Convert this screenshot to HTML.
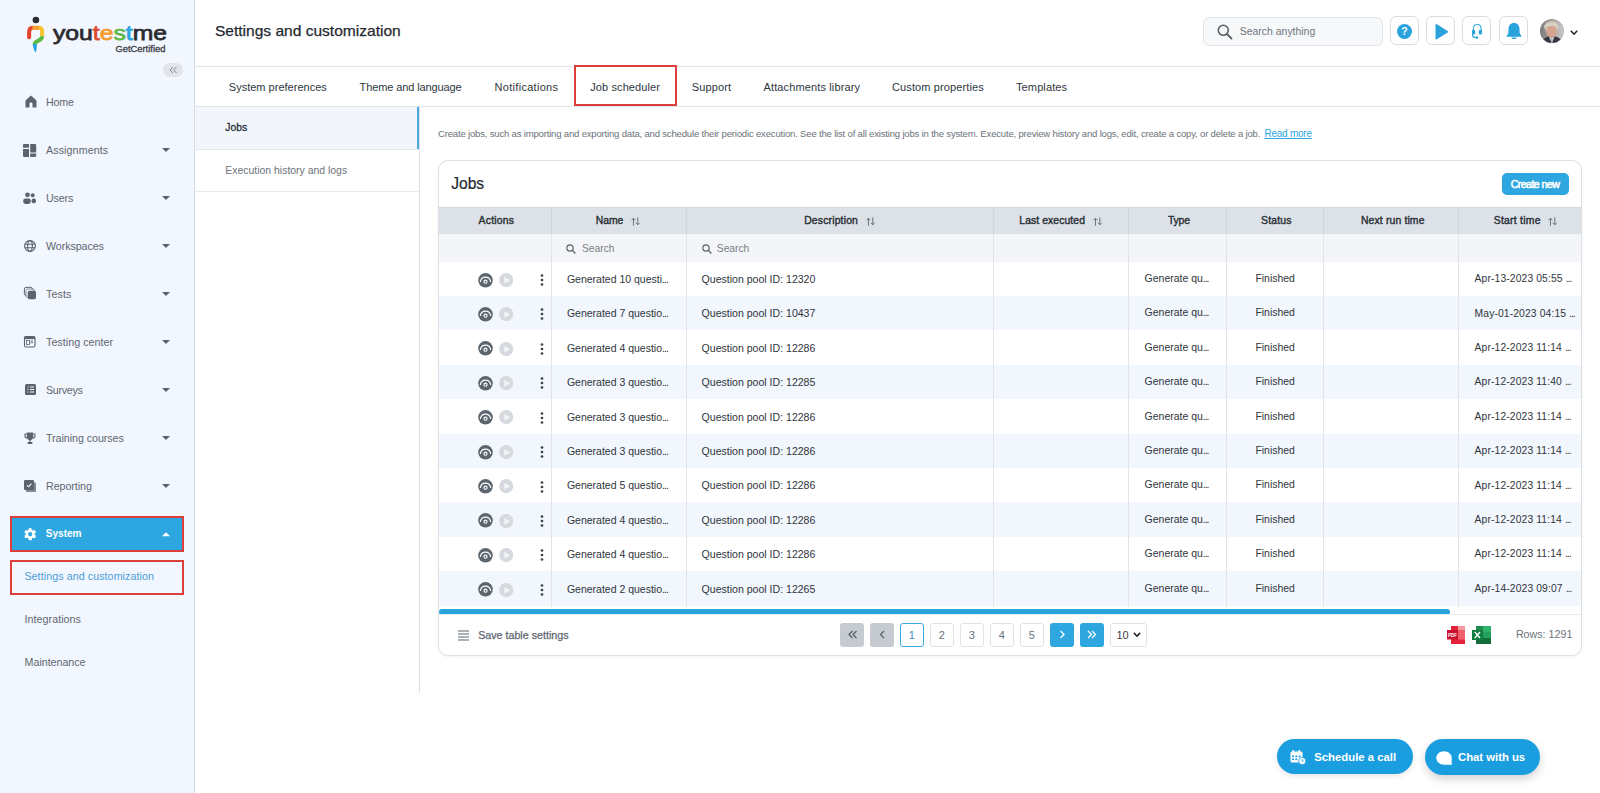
<!DOCTYPE html>
<html><head><meta charset="utf-8"><title>Settings and customization</title>
<style>
html,body{margin:0;padding:0;}
body{width:1600px;height:793px;position:relative;overflow:hidden;background:#fff;font-family:"Liberation Sans",sans-serif;}
.a{position:absolute;}
.t{position:absolute;white-space:nowrap;line-height:1;}
svg.a{overflow:visible;}
</style></head><body>
<div class="a" style="left:0px;top:0px;width:194px;height:793px;background:#f2f6fe"></div>
<div class="a" style="left:194px;top:0px;width:1px;height:793px;background:#d8dce1"></div>
<svg class="a" style="left:24px;top:14px;" width="24" height="42" viewBox="0 0 24 42"><circle cx="11.9" cy="6.0" r="3.3" fill="#2b2b30"/><path d="M5.1 23.3 V18.3 C5.1 15.6 6.2 13.8 8.6 13.8" stroke="#e2452d" stroke-width="4.1" fill="none" stroke-linecap="round"/><path d="M8.3 13.8 H15.2" stroke="#f59a2c" stroke-width="4.1" fill="none"/><path d="M15 13.8 C17.2 13.8 18.1 15.5 18.1 17.8 V22.5" stroke="#f6c530" stroke-width="4.1" fill="none"/><path d="M18.1 22.2 C18.1 25.5 15.5 26.3 13.5 27.2 C11.5 28.1 10.8 29.2 10.8 30.5" stroke="#5cb947" stroke-width="4.1" fill="none"/><path d="M8.75 30 H12.85 C12.9 33.5 12.5 36.5 11.6 38.7 C10.3 36.5 8.8 33.5 8.75 30 Z" fill="#2aa2e0"/></svg>
<div class="t" style="left:52.50px;top:22.94px;font-size:20.5px;color:#2b2b30;-webkit-text-stroke:0.75px currentColor;transform-origin:0 0;transform:scaleX(1.205)"><span style="color:#2b2b30">you</span><span style="color:#db4a2a">t</span><span style="color:#f39b2b">e</span><span style="color:#5cb947">s</span><span style="color:#2ba3df">t</span><span style="color:#2b2b30">me</span></div>
<div class="t" style="left:115.40px;top:44.24px;font-size:9.4px;color:#3a3b3f;-webkit-text-stroke:0.3px #3a3b3f">GetCertified</div>
<div class="a" style="left:163px;top:63px;width:20px;height:14px;background:#e1e5ea;border-radius:7px"></div>
<svg class="a" style="left:167px;top:65px;" width="12" height="10" viewBox="0 12 10"><path d="M6 2 L3 5 L6 8 M9.5 2 L6.5 5 L9.5 8" stroke="#7d848c" stroke-width="1" fill="none"/></svg>
<div class="t" style="left:46.00px;top:96.94px;font-size:10.7px;color:#5f6770;letter-spacing:-0.156px;">Home</div>
<svg class="a" style="left:25px;top:95px;" width="12" height="13" viewBox="0 0 12 13"><path d="M6 0.5 L0.5 5.5 L0.5 12.5 L4.5 12.5 L4.5 8.5 C4.5 7.3 7.5 7.3 7.5 8.5 L7.5 12.5 L11.5 12.5 L11.5 5.5 Z" fill="#5b646d"/></svg>
<div class="t" style="left:46.00px;top:144.94px;font-size:10.7px;color:#5f6770;letter-spacing:0.094px;">Assignments</div>
<svg class="a" style="left:23.3px;top:144px;" width="13.2" height="13" viewBox="0 0 13.2 13"><path d="M0 1.2 C0 0.5 0.5 0 1.2 0 H6 V3.8 H0 Z M0 5 H6 V13 H1.2 C0.5 13 0 12.5 0 11.8 Z M7.2 0 H12 C12.7 0 13.2 0.5 13.2 1.2 V8.4 H7.2 Z M7.2 9.6 H13.2 V11.8 C13.2 12.5 12.7 13 12 13 H7.2 Z" fill="#5b646d"/></svg>
<svg class="a" style="left:162px;top:148px;" width="8" height="4" viewBox="0 0 8 4"><path d="M0 0 H8 L4 4 Z" fill="#5b646d"/></svg>
<div class="t" style="left:46.00px;top:192.94px;font-size:10.7px;color:#5f6770;letter-spacing:-0.132px;">Users</div>
<svg class="a" style="left:23.3px;top:191.8px;" width="13.2" height="12" viewBox="0 0 13.2 12"><circle cx="4.5" cy="2.8" r="2.4" fill="#5b646d"/><circle cx="9.7" cy="3.3" r="2" fill="#5b646d"/><rect x="0.2" y="6.5" width="7.6" height="5.4" rx="2.3" fill="#5b646d"/><rect x="8.6" y="6.5" width="4.4" height="4.7" rx="2" fill="#5b646d"/></svg>
<svg class="a" style="left:162px;top:196px;" width="8" height="4" viewBox="0 0 8 4"><path d="M0 0 H8 L4 4 Z" fill="#5b646d"/></svg>
<div class="t" style="left:46.00px;top:240.94px;font-size:10.7px;color:#5f6770;letter-spacing:-0.077px;">Workspaces</div>
<svg class="a" style="left:24px;top:240px;" width="12" height="12" viewBox="0 0 12 12"><g stroke="#5b646d" stroke-width="1.1" fill="none"><circle cx="6" cy="6" r="5.4"/><ellipse cx="6" cy="6" rx="2.4" ry="5.4"/><path d="M0.8 4.2 H11.2 M0.8 7.8 H11.2"/></g></svg>
<svg class="a" style="left:162px;top:244px;" width="8" height="4" viewBox="0 0 8 4"><path d="M0 0 H8 L4 4 Z" fill="#5b646d"/></svg>
<div class="t" style="left:46.00px;top:288.94px;font-size:10.7px;color:#5f6770;letter-spacing:0.104px;">Tests</div>
<svg class="a" style="left:23.9px;top:287px;" width="12.2" height="12.4" viewBox="0 0 12.2 12.4"><rect x="0.4" y="0.4" width="8" height="8" rx="1.6" fill="none" stroke="#5b646d" stroke-width="1"/><rect x="2" y="2" width="8.5" height="8.5" rx="1.6" fill="#f2f6fe" stroke="#5b646d" stroke-width="0.8" opacity="0.85"/><rect x="3.8" y="3.8" width="8.2" height="8.4" rx="1.6" fill="#5b646d"/></svg>
<svg class="a" style="left:162px;top:292px;" width="8" height="4" viewBox="0 0 8 4"><path d="M0 0 H8 L4 4 Z" fill="#5b646d"/></svg>
<div class="t" style="left:46.00px;top:336.94px;font-size:10.7px;color:#5f6770;letter-spacing:0.038px;">Testing center</div>
<svg class="a" style="left:24.3px;top:336px;" width="11.5" height="11.5" viewBox="0 0 11.5 11.5"><rect x="0.5" y="0.5" width="10.5" height="10.5" rx="1.5" fill="none" stroke="#5b646d" stroke-width="1.1"/><rect x="0.5" y="0.5" width="10.5" height="2.6" fill="#5b646d"/><rect x="2.5" y="4.5" width="3" height="4" fill="none" stroke="#5b646d" stroke-width="0.8"/><path d="M6.5 5 H9 M6.5 6.7 H9" stroke="#5b646d" stroke-width="0.9"/></svg>
<svg class="a" style="left:162px;top:340px;" width="8" height="4" viewBox="0 0 8 4"><path d="M0 0 H8 L4 4 Z" fill="#5b646d"/></svg>
<div class="t" style="left:46.00px;top:384.94px;font-size:10.7px;color:#5f6770;letter-spacing:-0.304px;">Surveys</div>
<svg class="a" style="left:24.5px;top:383.8px;" width="11" height="11" viewBox="0 0 11 11"><rect x="0" y="0" width="11" height="11" rx="1.5" fill="#5b646d"/><path d="M2.5 3 H3.5 M2.5 5.5 H3.5 M2.5 8 H3.5 M5 3 H9 M5 5.5 H9 M5 8 H9" stroke="#f2f6fe" stroke-width="1.1"/></svg>
<svg class="a" style="left:162px;top:388px;" width="8" height="4" viewBox="0 0 8 4"><path d="M0 0 H8 L4 4 Z" fill="#5b646d"/></svg>
<div class="t" style="left:46.00px;top:432.94px;font-size:10.7px;color:#5f6770;letter-spacing:-0.053px;">Training courses</div>
<svg class="a" style="left:23.6px;top:431.6px;" width="12" height="12" viewBox="0 0 12 12"><path d="M2.8 0.5 H9.2 V4.5 C9.2 7 7.8 8 6 8.3 C4.2 8 2.8 7 2.8 4.5 Z" fill="#5b646d"/><path d="M2.8 2 H1 V4 C1 5.2 2 6 3.2 6 M9.2 2 H11 V4 C11 5.2 10 6 8.8 6" stroke="#5b646d" stroke-width="1.1" fill="none"/><rect x="5.4" y="8" width="1.2" height="2" fill="#5b646d"/><rect x="3.5" y="10" width="5" height="2" rx="0.8" fill="#5b646d"/></svg>
<svg class="a" style="left:162px;top:436px;" width="8" height="4" viewBox="0 0 8 4"><path d="M0 0 H8 L4 4 Z" fill="#5b646d"/></svg>
<div class="t" style="left:46.00px;top:480.94px;font-size:10.7px;color:#5f6770;letter-spacing:-0.048px;">Reporting</div>
<svg class="a" style="left:23.8px;top:480px;" width="12" height="12" viewBox="0 0 12 12"><rect x="2" y="2.5" width="10" height="9.5" rx="1" fill="#5b646d" opacity="0.75"/><rect x="0" y="0" width="10" height="10" rx="1" fill="#5b646d"/><path d="M3 5.2 L4.6 6.8 L7.4 3.6" stroke="#f2f6fe" stroke-width="1.1" fill="none"/></svg>
<svg class="a" style="left:162px;top:484px;" width="8" height="4" viewBox="0 0 8 4"><path d="M0 0 H8 L4 4 Z" fill="#5b646d"/></svg>
<div class="a" style="left:10px;top:516px;width:174px;height:36px;background:#2ea6df;box-sizing:border-box;border:2px solid #dc3f3b"></div>
<svg class="a" style="left:22.9px;top:526.8px;" width="14.4" height="14.4" viewBox="0 0 24 24"><path fill="#fff" d="M19.4 13c.04-.33.06-.66.06-1s-.02-.67-.06-1l2.1-1.65c.2-.15.25-.42.13-.64l-2-3.46c-.12-.22-.39-.3-.61-.22l-2.49 1c-.52-.4-1.08-.73-1.69-.98l-.38-2.65C14.46 2.18 14.25 2 14 2h-4c-.25 0-.46.18-.49.42l-.38 2.65c-.61.25-1.17.59-1.69.98l-2.49-1c-.23-.09-.49 0-.61.22l-2 3.46c-.13.22-.07.49.12.64L4.57 11c-.04.33-.07.67-.07 1s.03.67.07 1l-2.11 1.65c-.19.15-.24.42-.12.64l2 3.46c.12.22.39.3.61.22l2.49-1c.52.4 1.08.73 1.69.98l.38 2.65c.03.24.24.42.49.42h4c.25 0 .46-.18.49-.42l.38-2.65c.61-.25 1.17-.59 1.69-.98l2.49 1c.23.09.49 0 .61-.22l2-3.46c.12-.22.07-.49-.12-.64L19.4 13zM12 15.5c-1.93 0-3.5-1.57-3.5-3.5s1.57-3.5 3.5-3.5 3.5 1.57 3.5 3.5-1.57 3.5-3.5 3.5z"/></svg>
<div class="t" style="left:45.70px;top:529.05px;font-size:10.1px;color:#ffffff;font-weight:bold;">System</div>
<svg class="a" style="left:162px;top:531.8px;" width="8" height="4.3" viewBox="0 0 8 4"><path d="M0 4 H8 L4 0 Z" fill="#fff"/></svg>
<div class="a" style="left:10px;top:559.5px;width:174px;height:35px;box-sizing:border-box;border:2px solid #dc3f3b"></div>
<div class="t" style="left:24.40px;top:571.14px;font-size:10.7px;color:#4a9ed6;letter-spacing:0.073px;">Settings and customization</div>
<div class="t" style="left:24.60px;top:613.64px;font-size:10.7px;color:#5f6770;letter-spacing:0.045px;">Integrations</div>
<div class="t" style="left:24.60px;top:656.64px;font-size:10.7px;color:#5f6770;letter-spacing:-0.026px;">Maintenance</div>
<div class="t" style="left:214.90px;top:22.93px;font-size:15.55px;color:#1f2830;-webkit-text-stroke:0.25px #1f2830">Settings and customization</div>
<div class="a" style="left:195px;top:66px;width:1405px;height:1px;background:#e1e4e8"></div>
<div class="a" style="left:1203px;top:16.5px;width:180px;height:29px;box-sizing:border-box;background:#f7f8fa;border:1px solid #e2e5e9;border-radius:6px"></div>
<svg class="a" style="left:1217px;top:23.5px;" width="16" height="16" viewBox="0 0 16 16"><circle cx="6.3" cy="6.3" r="5" stroke="#555d65" stroke-width="1.6" fill="none"/><path d="M10 10 L14.5 14.5" stroke="#555d65" stroke-width="1.8" stroke-linecap="round"/></svg>
<div class="t" style="left:1239.80px;top:27.05px;font-size:10.45px;color:#6f767d;">Search anything</div>
<div class="a" style="left:1390.4px;top:16.3px;width:29px;height:29px;box-sizing:border-box;background:#fff;border:1px solid #d9dde2;border-radius:6px"></div>
<div class="a" style="left:1426.3px;top:16.3px;width:29px;height:29px;box-sizing:border-box;background:#fff;border:1px solid #d9dde2;border-radius:6px"></div>
<div class="a" style="left:1462.2px;top:16.3px;width:29px;height:29px;box-sizing:border-box;background:#fff;border:1px solid #d9dde2;border-radius:6px"></div>
<div class="a" style="left:1498.5px;top:16.3px;width:29px;height:29px;box-sizing:border-box;background:#fff;border:1px solid #d9dde2;border-radius:6px"></div>
<svg class="a" style="left:1397.4px;top:24.2px;" width="15" height="15" viewBox="0 0 15 15"><circle cx="7.5" cy="7.5" r="7.5" fill="#2aa3dd"/><text x="7.5" y="11.3" text-anchor="middle" font-family="Liberation Sans" font-weight="bold" font-size="10.5" fill="#fff">?</text></svg>
<svg class="a" style="left:1434px;top:24px;" width="14.5" height="15.5" viewBox="0 0 14.5 15.5"><path d="M1.5 1 C1.5 0.2 2.2 -0.1 2.9 0.3 L13.6 6.9 C14.2 7.3 14.2 8.2 13.6 8.6 L2.9 15.2 C2.2 15.6 1.5 15.3 1.5 14.5 Z" fill="#2aa3dd"/></svg>
<svg class="a" style="left:1470.5px;top:23px;" width="13" height="16" viewBox="0 0 13 16"><path d="M2.3 8.5 V6.8 C2.3 3.4 4 1.2 6.2 1.2 C8.6 1.2 10.2 3.4 10.2 6.8 V8.5" stroke="#2aa3dd" stroke-width="1.1" fill="none"/><rect x="1" y="7" width="3.1" height="4.4" rx="0.8" fill="#2aa3dd"/><rect x="7.8" y="7" width="3.1" height="4.4" rx="0.8" fill="#2aa3dd"/><path d="M1.6 11 V12.5 C1.6 13.8 2.6 14.5 4.5 14.5 H5.5" stroke="#2aa3dd" stroke-width="1.1" fill="none"/><circle cx="5.9" cy="14.5" r="1.3" fill="#2aa3dd"/></svg>
<svg class="a" style="left:1505.5px;top:23px;" width="16" height="17" viewBox="0 0 16 17"><path d="M8 0 C11.6 0 13.4 2.6 13.5 6 L13.7 10 C13.8 11 14.6 11.8 15.3 12.4 V13.8 H0.7 V12.4 C1.4 11.8 2.2 11 2.3 10 L2.5 6 C2.6 2.6 4.4 0 8 0 Z" fill="#2aa3dd"/><path d="M5.3 14.4 H10.7 C10.3 15.5 9.3 16 8 16 C6.7 16 5.7 15.5 5.3 14.4 Z" fill="#2aa3dd"/></svg>
<svg class="a" style="left:1540px;top:19.3px;" width="24" height="24" viewBox="0 0 24 24"><defs><clipPath id="av"><circle cx="12" cy="12" r="12"/></clipPath><linearGradient id="avg" x1="0" x2="1"><stop offset="0" stop-color="#7b7b7d"/><stop offset="0.5" stop-color="#a5a39f"/><stop offset="1" stop-color="#c9cbcc"/></linearGradient></defs><g clip-path="url(#av)"><rect width="24" height="24" fill="url(#avg)"/><ellipse cx="11.5" cy="8" rx="7.2" ry="6" fill="#cfc6b6"/><ellipse cx="11.5" cy="12.5" rx="5.2" ry="6" fill="#d6a48e"/><path d="M4 8.5 C5 5 8 4 11.5 4 C15 4 18 5 19 8.5 C17 7 14 6.8 11.5 6.8 C9 6.8 6 7 4 8.5 Z" fill="#d9d3c6"/><path d="M2 24 C3 19.5 6 18 9 17.5 L11.8 20 L14.5 17.5 C18 18 21 19.5 22.5 24 Z" fill="#34373d"/><path d="M9 17.8 L11.8 24 L14.5 17.8 L11.8 19.5 Z" fill="#dfe3ea"/><path d="M11.3 19.5 H12.3 L12.6 24 H11 Z" fill="#9aa6c0"/><circle cx="12" cy="12" r="11.8" fill="none" stroke="#777" stroke-width="0.4" opacity="0.5"/></g></svg>
<svg class="a" style="left:1569.8px;top:29.8px;" width="8" height="5.2" viewBox="0 0 8 5.2"><path d="M0.8 0.8 L4 4.2 L7.2 0.8" stroke="#222528" stroke-width="1.6" fill="none"/></svg>
<div class="t" style="left:228.80px;top:81.59px;font-size:11.0px;color:#2f3740;letter-spacing:0.009px;">System preferences</div>
<div class="t" style="left:359.60px;top:81.59px;font-size:11.0px;color:#2f3740;letter-spacing:-0.109px;">Theme and language</div>
<div class="t" style="left:494.60px;top:81.59px;font-size:11.0px;color:#2f3740;letter-spacing:0.292px;">Notifications</div>
<div class="t" style="left:590.20px;top:81.59px;font-size:11.0px;color:#2f3740;letter-spacing:0.110px;">Job scheduler</div>
<div class="t" style="left:691.80px;top:81.59px;font-size:11.0px;color:#2f3740;letter-spacing:0.141px;">Support</div>
<div class="t" style="left:763.50px;top:81.59px;font-size:11.0px;color:#2f3740;letter-spacing:0.130px;">Attachments library</div>
<div class="t" style="left:892.00px;top:81.59px;font-size:11.0px;color:#2f3740;letter-spacing:0.114px;">Custom properties</div>
<div class="t" style="left:1016.00px;top:81.59px;font-size:11.0px;color:#2f3740;letter-spacing:0.118px;">Templates</div>
<div class="a" style="left:195px;top:106px;width:1405px;height:1px;background:#e1e4e8"></div>
<div class="a" style="left:573.6px;top:65.4px;width:103.6px;height:41px;box-sizing:border-box;border:2px solid #dc3f3b"></div>
<div class="a" style="left:195px;top:107px;width:224px;height:41.5px;background:#f2f6fc"></div>
<div class="a" style="left:417px;top:107px;width:2px;height:41.5px;background:#4ea9dc"></div>
<div class="a" style="left:195px;top:148.5px;width:224px;height:1.5px;background:#e3e7eb"></div>
<div class="t" style="left:225.30px;top:122.88px;font-size:10.3px;color:#2b3137;-webkit-text-stroke:0.3px #2b3137">Jobs</div>
<div class="t" style="left:225.30px;top:165.65px;font-size:10.45px;color:#6b737b;">Execution history and logs</div>
<div class="a" style="left:195px;top:191px;width:224px;height:1px;background:#e6e9ed"></div>
<div class="a" style="left:419px;top:106px;width:1px;height:586.5px;background:#dde1e6"></div>
<div class="t" style="left:438.00px;top:129.21px;font-size:9.55px;color:#6b737b;letter-spacing:-0.187px;">Create jobs, such as importing and exporting data, and schedule their periodic execution. See the list of all existing jobs in the system. Execute, preview history and logs, edit, create a copy, or delete a job.</div>
<div class="t" style="left:1264.40px;top:129.13px;font-size:10.0px;color:#2ea6df;text-decoration:underline;letter-spacing:-0.231px;">Read more</div>
<div class="a" style="left:438px;top:160px;width:1144px;height:495.5px;box-sizing:border-box;border:1px solid #dde1e6;border-radius:10px;background:#fff;box-shadow:0 1px 3px rgba(0,0,0,0.06);overflow:hidden"><div class="t" style="left:12.20px;top:14.99px;font-size:15.6px;color:#1f2830;-webkit-text-stroke:0.2px #1f2830">Jobs</div>
<div class="a" style="left:1063px;top:12px;width:67px;height:22px;background:#2ea6df;border-radius:5px"></div>
<div class="t" style="left:1071.70px;top:18.42px;font-size:10.6px;color:#ffffff;-webkit-text-stroke:0.55px #fff;letter-spacing:-0.547px;">Create new</div>
<div class="a" style="left:0px;top:46px;width:1143px;height:27px;background:#dde2e8"></div>
<div class="a" style="left:0px;top:73px;width:1143px;height:27.5px;background:#f3f5f8"></div>
<div class="a" style="left:0px;top:46px;width:1143px;height:1px;background:#d3d8de"></div>
<div class="t" style="left:39.60px;top:54.69px;font-size:10.4px;color:#2a3036;-webkit-text-stroke:0.4px #2a3036;letter-spacing:0.215px;">Actions</div>
<div class="t" style="left:156.70px;top:54.69px;font-size:10.4px;color:#2a3036;-webkit-text-stroke:0.4px #2a3036;letter-spacing:-0.023px;">Name</div>
<div class="t" style="left:365.20px;top:54.69px;font-size:10.4px;color:#2a3036;-webkit-text-stroke:0.4px #2a3036;letter-spacing:0.170px;">Description</div>
<div class="t" style="left:580.30px;top:54.69px;font-size:10.4px;color:#2a3036;-webkit-text-stroke:0.4px #2a3036;letter-spacing:0.080px;">Last executed</div>
<div class="t" style="left:728.90px;top:54.69px;font-size:10.4px;color:#2a3036;-webkit-text-stroke:0.4px #2a3036;letter-spacing:-0.123px;">Type</div>
<div class="t" style="left:822.00px;top:54.69px;font-size:10.4px;color:#2a3036;-webkit-text-stroke:0.4px #2a3036;letter-spacing:0.203px;">Status</div>
<div class="t" style="left:921.90px;top:54.69px;font-size:10.4px;color:#2a3036;-webkit-text-stroke:0.4px #2a3036;letter-spacing:0.148px;">Next run time</div>
<div class="t" style="left:1054.70px;top:54.69px;font-size:10.4px;color:#2a3036;-webkit-text-stroke:0.4px #2a3036;letter-spacing:0.265px;">Start time</div>
<svg class="a" style="left:190.9px;top:56.2px;" width="11" height="9" viewBox="0 0 11 11"><path d="M3 10.5 V1.5 M0.6 3.9 L3 1.5 L5.4 3.9 M8.3 0.5 V9.5 M5.9 7.1 L8.3 9.5 L10.7 7.1" stroke="#5d656d" stroke-width="1.1" fill="none"/></svg>
<svg class="a" style="left:425.9px;top:56.2px;" width="11" height="9" viewBox="0 0 11 11"><path d="M3 10.5 V1.5 M0.6 3.9 L3 1.5 L5.4 3.9 M8.3 0.5 V9.5 M5.9 7.1 L8.3 9.5 L10.7 7.1" stroke="#5d656d" stroke-width="1.1" fill="none"/></svg>
<svg class="a" style="left:652.5px;top:56.2px;" width="11" height="9" viewBox="0 0 11 11"><path d="M3 10.5 V1.5 M0.6 3.9 L3 1.5 L5.4 3.9 M8.3 0.5 V9.5 M5.9 7.1 L8.3 9.5 L10.7 7.1" stroke="#5d656d" stroke-width="1.1" fill="none"/></svg>
<svg class="a" style="left:1108.4px;top:56.2px;" width="11" height="9" viewBox="0 0 11 11"><path d="M3 10.5 V1.5 M0.6 3.9 L3 1.5 L5.4 3.9 M8.3 0.5 V9.5 M5.9 7.1 L8.3 9.5 L10.7 7.1" stroke="#5d656d" stroke-width="1.1" fill="none"/></svg>
<svg class="a" style="left:127.4px;top:82.6px;" width="10" height="10" viewBox="0 0 10 10"><circle cx="4" cy="4" r="3.2" stroke="#5d656d" stroke-width="1.2" fill="none"/><path d="M6.4 6.4 L9 9" stroke="#5d656d" stroke-width="1.4" stroke-linecap="round"/></svg>
<div class="t" style="left:143.00px;top:83.21px;font-size:10.26px;color:#7a8087;">Search</div>
<svg class="a" style="left:262.6px;top:82.6px;" width="10" height="10" viewBox="0 0 10 10"><circle cx="4" cy="4" r="3.2" stroke="#5d656d" stroke-width="1.2" fill="none"/><path d="M6.4 6.4 L9 9" stroke="#5d656d" stroke-width="1.4" stroke-linecap="round"/></svg>
<div class="t" style="left:277.80px;top:83.21px;font-size:10.26px;color:#7a8087;">Search</div>
<svg class="a" style="left:38.8px;top:111.5px;" width="15" height="15" viewBox="0 0 15 15"><circle cx="7.5" cy="7.3" r="7.3" fill="#5d666f"/><path d="M2.4 8.4 C3.6 2.8 11.4 2.8 12.6 8.4" stroke="#fff" stroke-width="1.25" fill="none" stroke-linecap="round"/><circle cx="7.5" cy="8.7" r="1.55" fill="none" stroke="#fff" stroke-width="1.15"/></svg>
<svg class="a" style="left:59.8px;top:111.8px;" width="14.4" height="14.4" viewBox="0 0 14.4 14.4"><circle cx="7.2" cy="7.1" r="7.05" fill="#d6d9dd"/><path d="M5.3 4 L11.3 7.3 L5.3 10.8 Z" fill="#f3f4f6"/></svg>
<svg class="a" style="left:100.6px;top:113.0px;" width="4" height="12" viewBox="0 0 4 12"><circle cx="2" cy="1.5" r="1.35" fill="#3b4148"/><circle cx="2" cy="6" r="1.35" fill="#3b4148"/><circle cx="2" cy="10.5" r="1.35" fill="#3b4148"/></svg>
<div class="t" style="left:127.90px;top:112.91px;font-size:10.5px;color:#2f353b;">Generated 10 questi<span style="letter-spacing:-1px">...</span></div>
<div class="t" style="left:262.60px;top:112.87px;font-size:10.55px;color:#2f353b;">Question pool ID: 12320</div>
<div class="t" style="left:705.60px;top:112.94px;font-size:10.47px;color:#2f353b;">Generate qu<span style="letter-spacing:-1px">...</span></div>
<div class="t" style="left:816.40px;top:112.95px;font-size:10.45px;color:#2f353b;">Finished</div>
<div class="t" style="left:1035.60px;top:113.08px;font-size:10.3px;color:#2f353b;letter-spacing:0.13px">Apr-13-2023 05:55 <span style="letter-spacing:-1px">...</span></div>
<div class="a" style="left:0px;top:134.92px;width:1143px;height:34.42px;background:#f2f6fd"></div>
<svg class="a" style="left:38.8px;top:145.92px;" width="15" height="15" viewBox="0 0 15 15"><circle cx="7.5" cy="7.3" r="7.3" fill="#5d666f"/><path d="M2.4 8.4 C3.6 2.8 11.4 2.8 12.6 8.4" stroke="#fff" stroke-width="1.25" fill="none" stroke-linecap="round"/><circle cx="7.5" cy="8.7" r="1.55" fill="none" stroke="#fff" stroke-width="1.15"/></svg>
<svg class="a" style="left:59.8px;top:146.22px;" width="14.4" height="14.4" viewBox="0 0 14.4 14.4"><circle cx="7.2" cy="7.1" r="7.05" fill="#d6d9dd"/><path d="M5.3 4 L11.3 7.3 L5.3 10.8 Z" fill="#f3f4f6"/></svg>
<svg class="a" style="left:100.6px;top:147.42px;" width="4" height="12" viewBox="0 0 4 12"><circle cx="2" cy="1.5" r="1.35" fill="#3b4148"/><circle cx="2" cy="6" r="1.35" fill="#3b4148"/><circle cx="2" cy="10.5" r="1.35" fill="#3b4148"/></svg>
<div class="t" style="left:127.90px;top:147.33px;font-size:10.5px;color:#2f353b;">Generated 7 questio<span style="letter-spacing:-1px">...</span></div>
<div class="t" style="left:262.60px;top:147.29px;font-size:10.55px;color:#2f353b;">Question pool ID: 10437</div>
<div class="t" style="left:705.60px;top:147.36px;font-size:10.47px;color:#2f353b;">Generate qu<span style="letter-spacing:-1px">...</span></div>
<div class="t" style="left:816.40px;top:147.37px;font-size:10.45px;color:#2f353b;">Finished</div>
<div class="t" style="left:1035.60px;top:147.50px;font-size:10.3px;color:#2f353b;letter-spacing:0.13px">May-01-2023 04:15 <span style="letter-spacing:-1px">...</span></div>
<svg class="a" style="left:38.8px;top:180.34px;" width="15" height="15" viewBox="0 0 15 15"><circle cx="7.5" cy="7.3" r="7.3" fill="#5d666f"/><path d="M2.4 8.4 C3.6 2.8 11.4 2.8 12.6 8.4" stroke="#fff" stroke-width="1.25" fill="none" stroke-linecap="round"/><circle cx="7.5" cy="8.7" r="1.55" fill="none" stroke="#fff" stroke-width="1.15"/></svg>
<svg class="a" style="left:59.8px;top:180.64px;" width="14.4" height="14.4" viewBox="0 0 14.4 14.4"><circle cx="7.2" cy="7.1" r="7.05" fill="#d6d9dd"/><path d="M5.3 4 L11.3 7.3 L5.3 10.8 Z" fill="#f3f4f6"/></svg>
<svg class="a" style="left:100.6px;top:181.84px;" width="4" height="12" viewBox="0 0 4 12"><circle cx="2" cy="1.5" r="1.35" fill="#3b4148"/><circle cx="2" cy="6" r="1.35" fill="#3b4148"/><circle cx="2" cy="10.5" r="1.35" fill="#3b4148"/></svg>
<div class="t" style="left:127.90px;top:181.75px;font-size:10.5px;color:#2f353b;">Generated 4 questio<span style="letter-spacing:-1px">...</span></div>
<div class="t" style="left:262.60px;top:181.71px;font-size:10.55px;color:#2f353b;">Question pool ID: 12286</div>
<div class="t" style="left:705.60px;top:181.78px;font-size:10.47px;color:#2f353b;">Generate qu<span style="letter-spacing:-1px">...</span></div>
<div class="t" style="left:816.40px;top:181.79px;font-size:10.45px;color:#2f353b;">Finished</div>
<div class="t" style="left:1035.60px;top:181.92px;font-size:10.3px;color:#2f353b;letter-spacing:0.13px">Apr-12-2023 11:14 <span style="letter-spacing:-1px">...</span></div>
<div class="a" style="left:0px;top:203.76px;width:1143px;height:34.42px;background:#f2f6fd"></div>
<svg class="a" style="left:38.8px;top:214.76px;" width="15" height="15" viewBox="0 0 15 15"><circle cx="7.5" cy="7.3" r="7.3" fill="#5d666f"/><path d="M2.4 8.4 C3.6 2.8 11.4 2.8 12.6 8.4" stroke="#fff" stroke-width="1.25" fill="none" stroke-linecap="round"/><circle cx="7.5" cy="8.7" r="1.55" fill="none" stroke="#fff" stroke-width="1.15"/></svg>
<svg class="a" style="left:59.8px;top:215.06px;" width="14.4" height="14.4" viewBox="0 0 14.4 14.4"><circle cx="7.2" cy="7.1" r="7.05" fill="#d6d9dd"/><path d="M5.3 4 L11.3 7.3 L5.3 10.8 Z" fill="#f3f4f6"/></svg>
<svg class="a" style="left:100.6px;top:216.26px;" width="4" height="12" viewBox="0 0 4 12"><circle cx="2" cy="1.5" r="1.35" fill="#3b4148"/><circle cx="2" cy="6" r="1.35" fill="#3b4148"/><circle cx="2" cy="10.5" r="1.35" fill="#3b4148"/></svg>
<div class="t" style="left:127.90px;top:216.17px;font-size:10.5px;color:#2f353b;">Generated 3 questio<span style="letter-spacing:-1px">...</span></div>
<div class="t" style="left:262.60px;top:216.13px;font-size:10.55px;color:#2f353b;">Question pool ID: 12285</div>
<div class="t" style="left:705.60px;top:216.20px;font-size:10.47px;color:#2f353b;">Generate qu<span style="letter-spacing:-1px">...</span></div>
<div class="t" style="left:816.40px;top:216.21px;font-size:10.45px;color:#2f353b;">Finished</div>
<div class="t" style="left:1035.60px;top:216.34px;font-size:10.3px;color:#2f353b;letter-spacing:0.13px">Apr-12-2023 11:40 <span style="letter-spacing:-1px">...</span></div>
<svg class="a" style="left:38.8px;top:249.18px;" width="15" height="15" viewBox="0 0 15 15"><circle cx="7.5" cy="7.3" r="7.3" fill="#5d666f"/><path d="M2.4 8.4 C3.6 2.8 11.4 2.8 12.6 8.4" stroke="#fff" stroke-width="1.25" fill="none" stroke-linecap="round"/><circle cx="7.5" cy="8.7" r="1.55" fill="none" stroke="#fff" stroke-width="1.15"/></svg>
<svg class="a" style="left:59.8px;top:249.48px;" width="14.4" height="14.4" viewBox="0 0 14.4 14.4"><circle cx="7.2" cy="7.1" r="7.05" fill="#d6d9dd"/><path d="M5.3 4 L11.3 7.3 L5.3 10.8 Z" fill="#f3f4f6"/></svg>
<svg class="a" style="left:100.6px;top:250.68px;" width="4" height="12" viewBox="0 0 4 12"><circle cx="2" cy="1.5" r="1.35" fill="#3b4148"/><circle cx="2" cy="6" r="1.35" fill="#3b4148"/><circle cx="2" cy="10.5" r="1.35" fill="#3b4148"/></svg>
<div class="t" style="left:127.90px;top:250.59px;font-size:10.5px;color:#2f353b;">Generated 3 questio<span style="letter-spacing:-1px">...</span></div>
<div class="t" style="left:262.60px;top:250.55px;font-size:10.55px;color:#2f353b;">Question pool ID: 12286</div>
<div class="t" style="left:705.60px;top:250.62px;font-size:10.47px;color:#2f353b;">Generate qu<span style="letter-spacing:-1px">...</span></div>
<div class="t" style="left:816.40px;top:250.63px;font-size:10.45px;color:#2f353b;">Finished</div>
<div class="t" style="left:1035.60px;top:250.76px;font-size:10.3px;color:#2f353b;letter-spacing:0.13px">Apr-12-2023 11:14 <span style="letter-spacing:-1px">...</span></div>
<div class="a" style="left:0px;top:272.6px;width:1143px;height:34.42px;background:#f2f6fd"></div>
<svg class="a" style="left:38.8px;top:283.6px;" width="15" height="15" viewBox="0 0 15 15"><circle cx="7.5" cy="7.3" r="7.3" fill="#5d666f"/><path d="M2.4 8.4 C3.6 2.8 11.4 2.8 12.6 8.4" stroke="#fff" stroke-width="1.25" fill="none" stroke-linecap="round"/><circle cx="7.5" cy="8.7" r="1.55" fill="none" stroke="#fff" stroke-width="1.15"/></svg>
<svg class="a" style="left:59.8px;top:283.9px;" width="14.4" height="14.4" viewBox="0 0 14.4 14.4"><circle cx="7.2" cy="7.1" r="7.05" fill="#d6d9dd"/><path d="M5.3 4 L11.3 7.3 L5.3 10.8 Z" fill="#f3f4f6"/></svg>
<svg class="a" style="left:100.6px;top:285.1px;" width="4" height="12" viewBox="0 0 4 12"><circle cx="2" cy="1.5" r="1.35" fill="#3b4148"/><circle cx="2" cy="6" r="1.35" fill="#3b4148"/><circle cx="2" cy="10.5" r="1.35" fill="#3b4148"/></svg>
<div class="t" style="left:127.90px;top:285.01px;font-size:10.5px;color:#2f353b;">Generated 3 questio<span style="letter-spacing:-1px">...</span></div>
<div class="t" style="left:262.60px;top:284.97px;font-size:10.55px;color:#2f353b;">Question pool ID: 12286</div>
<div class="t" style="left:705.60px;top:285.04px;font-size:10.47px;color:#2f353b;">Generate qu<span style="letter-spacing:-1px">...</span></div>
<div class="t" style="left:816.40px;top:285.05px;font-size:10.45px;color:#2f353b;">Finished</div>
<div class="t" style="left:1035.60px;top:285.18px;font-size:10.3px;color:#2f353b;letter-spacing:0.13px">Apr-12-2023 11:14 <span style="letter-spacing:-1px">...</span></div>
<svg class="a" style="left:38.8px;top:318.02px;" width="15" height="15" viewBox="0 0 15 15"><circle cx="7.5" cy="7.3" r="7.3" fill="#5d666f"/><path d="M2.4 8.4 C3.6 2.8 11.4 2.8 12.6 8.4" stroke="#fff" stroke-width="1.25" fill="none" stroke-linecap="round"/><circle cx="7.5" cy="8.7" r="1.55" fill="none" stroke="#fff" stroke-width="1.15"/></svg>
<svg class="a" style="left:59.8px;top:318.32px;" width="14.4" height="14.4" viewBox="0 0 14.4 14.4"><circle cx="7.2" cy="7.1" r="7.05" fill="#d6d9dd"/><path d="M5.3 4 L11.3 7.3 L5.3 10.8 Z" fill="#f3f4f6"/></svg>
<svg class="a" style="left:100.6px;top:319.52px;" width="4" height="12" viewBox="0 0 4 12"><circle cx="2" cy="1.5" r="1.35" fill="#3b4148"/><circle cx="2" cy="6" r="1.35" fill="#3b4148"/><circle cx="2" cy="10.5" r="1.35" fill="#3b4148"/></svg>
<div class="t" style="left:127.90px;top:319.43px;font-size:10.5px;color:#2f353b;">Generated 5 questio<span style="letter-spacing:-1px">...</span></div>
<div class="t" style="left:262.60px;top:319.39px;font-size:10.55px;color:#2f353b;">Question pool ID: 12286</div>
<div class="t" style="left:705.60px;top:319.46px;font-size:10.47px;color:#2f353b;">Generate qu<span style="letter-spacing:-1px">...</span></div>
<div class="t" style="left:816.40px;top:319.47px;font-size:10.45px;color:#2f353b;">Finished</div>
<div class="t" style="left:1035.60px;top:319.60px;font-size:10.3px;color:#2f353b;letter-spacing:0.13px">Apr-12-2023 11:14 <span style="letter-spacing:-1px">...</span></div>
<div class="a" style="left:0px;top:341.44px;width:1143px;height:34.42px;background:#f2f6fd"></div>
<svg class="a" style="left:38.8px;top:352.44px;" width="15" height="15" viewBox="0 0 15 15"><circle cx="7.5" cy="7.3" r="7.3" fill="#5d666f"/><path d="M2.4 8.4 C3.6 2.8 11.4 2.8 12.6 8.4" stroke="#fff" stroke-width="1.25" fill="none" stroke-linecap="round"/><circle cx="7.5" cy="8.7" r="1.55" fill="none" stroke="#fff" stroke-width="1.15"/></svg>
<svg class="a" style="left:59.8px;top:352.74px;" width="14.4" height="14.4" viewBox="0 0 14.4 14.4"><circle cx="7.2" cy="7.1" r="7.05" fill="#d6d9dd"/><path d="M5.3 4 L11.3 7.3 L5.3 10.8 Z" fill="#f3f4f6"/></svg>
<svg class="a" style="left:100.6px;top:353.94px;" width="4" height="12" viewBox="0 0 4 12"><circle cx="2" cy="1.5" r="1.35" fill="#3b4148"/><circle cx="2" cy="6" r="1.35" fill="#3b4148"/><circle cx="2" cy="10.5" r="1.35" fill="#3b4148"/></svg>
<div class="t" style="left:127.90px;top:353.85px;font-size:10.5px;color:#2f353b;">Generated 4 questio<span style="letter-spacing:-1px">...</span></div>
<div class="t" style="left:262.60px;top:353.81px;font-size:10.55px;color:#2f353b;">Question pool ID: 12286</div>
<div class="t" style="left:705.60px;top:353.88px;font-size:10.47px;color:#2f353b;">Generate qu<span style="letter-spacing:-1px">...</span></div>
<div class="t" style="left:816.40px;top:353.89px;font-size:10.45px;color:#2f353b;">Finished</div>
<div class="t" style="left:1035.60px;top:354.02px;font-size:10.3px;color:#2f353b;letter-spacing:0.13px">Apr-12-2023 11:14 <span style="letter-spacing:-1px">...</span></div>
<svg class="a" style="left:38.8px;top:386.86px;" width="15" height="15" viewBox="0 0 15 15"><circle cx="7.5" cy="7.3" r="7.3" fill="#5d666f"/><path d="M2.4 8.4 C3.6 2.8 11.4 2.8 12.6 8.4" stroke="#fff" stroke-width="1.25" fill="none" stroke-linecap="round"/><circle cx="7.5" cy="8.7" r="1.55" fill="none" stroke="#fff" stroke-width="1.15"/></svg>
<svg class="a" style="left:59.8px;top:387.16px;" width="14.4" height="14.4" viewBox="0 0 14.4 14.4"><circle cx="7.2" cy="7.1" r="7.05" fill="#d6d9dd"/><path d="M5.3 4 L11.3 7.3 L5.3 10.8 Z" fill="#f3f4f6"/></svg>
<svg class="a" style="left:100.6px;top:388.36px;" width="4" height="12" viewBox="0 0 4 12"><circle cx="2" cy="1.5" r="1.35" fill="#3b4148"/><circle cx="2" cy="6" r="1.35" fill="#3b4148"/><circle cx="2" cy="10.5" r="1.35" fill="#3b4148"/></svg>
<div class="t" style="left:127.90px;top:388.27px;font-size:10.5px;color:#2f353b;">Generated 4 questio<span style="letter-spacing:-1px">...</span></div>
<div class="t" style="left:262.60px;top:388.23px;font-size:10.55px;color:#2f353b;">Question pool ID: 12286</div>
<div class="t" style="left:705.60px;top:388.30px;font-size:10.47px;color:#2f353b;">Generate qu<span style="letter-spacing:-1px">...</span></div>
<div class="t" style="left:816.40px;top:388.31px;font-size:10.45px;color:#2f353b;">Finished</div>
<div class="t" style="left:1035.60px;top:388.44px;font-size:10.3px;color:#2f353b;letter-spacing:0.13px">Apr-12-2023 11:14 <span style="letter-spacing:-1px">...</span></div>
<div class="a" style="left:0px;top:410.28px;width:1143px;height:34.42px;background:#f2f6fd"></div>
<svg class="a" style="left:38.8px;top:421.28px;" width="15" height="15" viewBox="0 0 15 15"><circle cx="7.5" cy="7.3" r="7.3" fill="#5d666f"/><path d="M2.4 8.4 C3.6 2.8 11.4 2.8 12.6 8.4" stroke="#fff" stroke-width="1.25" fill="none" stroke-linecap="round"/><circle cx="7.5" cy="8.7" r="1.55" fill="none" stroke="#fff" stroke-width="1.15"/></svg>
<svg class="a" style="left:59.8px;top:421.58px;" width="14.4" height="14.4" viewBox="0 0 14.4 14.4"><circle cx="7.2" cy="7.1" r="7.05" fill="#d6d9dd"/><path d="M5.3 4 L11.3 7.3 L5.3 10.8 Z" fill="#f3f4f6"/></svg>
<svg class="a" style="left:100.6px;top:422.78px;" width="4" height="12" viewBox="0 0 4 12"><circle cx="2" cy="1.5" r="1.35" fill="#3b4148"/><circle cx="2" cy="6" r="1.35" fill="#3b4148"/><circle cx="2" cy="10.5" r="1.35" fill="#3b4148"/></svg>
<div class="t" style="left:127.90px;top:422.69px;font-size:10.5px;color:#2f353b;">Generated 2 questio<span style="letter-spacing:-1px">...</span></div>
<div class="t" style="left:262.60px;top:422.65px;font-size:10.55px;color:#2f353b;">Question pool ID: 12265</div>
<div class="t" style="left:705.60px;top:422.72px;font-size:10.47px;color:#2f353b;">Generate qu<span style="letter-spacing:-1px">...</span></div>
<div class="t" style="left:816.40px;top:422.73px;font-size:10.45px;color:#2f353b;">Finished</div>
<div class="t" style="left:1035.60px;top:422.86px;font-size:10.3px;color:#2f353b;letter-spacing:0.13px">Apr-14-2023 09:07 <span style="letter-spacing:-1px">...</span></div>
<div class="a" style="left:112px;top:46px;width:1px;height:27px;background:#cfd5dc"></div>
<div class="a" style="left:112px;top:73px;width:1px;height:372.5px;background:#e1e5ea"></div>
<div class="a" style="left:247px;top:46px;width:1px;height:27px;background:#cfd5dc"></div>
<div class="a" style="left:247px;top:73px;width:1px;height:372.5px;background:#e1e5ea"></div>
<div class="a" style="left:554px;top:46px;width:1px;height:27px;background:#cfd5dc"></div>
<div class="a" style="left:554px;top:73px;width:1px;height:372.5px;background:#e1e5ea"></div>
<div class="a" style="left:689px;top:46px;width:1px;height:27px;background:#cfd5dc"></div>
<div class="a" style="left:689px;top:73px;width:1px;height:372.5px;background:#e1e5ea"></div>
<div class="a" style="left:787px;top:46px;width:1px;height:27px;background:#cfd5dc"></div>
<div class="a" style="left:787px;top:73px;width:1px;height:372.5px;background:#e1e5ea"></div>
<div class="a" style="left:884px;top:46px;width:1px;height:27px;background:#cfd5dc"></div>
<div class="a" style="left:884px;top:73px;width:1px;height:372.5px;background:#e1e5ea"></div>
<div class="a" style="left:1019px;top:46px;width:1px;height:27px;background:#cfd5dc"></div>
<div class="a" style="left:1019px;top:73px;width:1px;height:372.5px;background:#e1e5ea"></div>
<div class="a" style="left:0px;top:447.5px;width:1011px;height:6px;background:#29a3dc;border-radius:3px"></div>
<div class="a" style="left:0px;top:453px;width:1143px;height:1px;background:#e8ebee"></div>
<svg class="a" style="left:18.5px;top:468.8px;" width="11" height="11" viewBox="0 0 11 11"><path d="M0 1 H11 M0 4 H11 M0 7 H11 M0 10 H11" stroke="#5c6670" stroke-width="1.2"/></svg>
<div class="t" style="left:39.20px;top:468.84px;font-size:10.7px;color:#5c6670;-webkit-text-stroke:0.25px #5c6670">Save table settings</div>
<div class="a" style="left:401px;top:462px;width:24px;height:23.6px;box-sizing:border-box;border-radius:3px;background:#c6cbd1"></div>
<svg class="a" style="left:408px;top:469.3px;" width="11" height="9" viewBox="0 0 11 9"><path d="M5.5 1 L2 4.5 L5.5 8 M9.5 1 L6 4.5 L9.5 8" stroke="#5a626a" stroke-width="1.3" fill="none"/></svg>
<div class="a" style="left:431px;top:462px;width:24px;height:23.6px;box-sizing:border-box;border-radius:3px;background:#c6cbd1"></div>
<svg class="a" style="left:440px;top:469.3px;" width="7" height="9" viewBox="0 0 7 9"><path d="M5 1 L1.5 4.5 L5 8" stroke="#5a626a" stroke-width="1.3" fill="none"/></svg>
<div class="a" style="left:461px;top:462px;width:24px;height:23.6px;box-sizing:border-box;border-radius:3px;background:#fff;border:1px solid #3aa9de"></div>
<div class="t" style="left:469.80px;top:469.09px;font-size:11px;color:#3f8fc0;">1</div>
<div class="a" style="left:491px;top:462px;width:24px;height:23.6px;box-sizing:border-box;border-radius:3px;background:#fff;border:1px solid #dfe2e6"></div>
<div class="t" style="left:499.80px;top:469.09px;font-size:11px;color:#6b737b;">2</div>
<div class="a" style="left:521px;top:462px;width:24px;height:23.6px;box-sizing:border-box;border-radius:3px;background:#fff;border:1px solid #dfe2e6"></div>
<div class="t" style="left:529.80px;top:469.09px;font-size:11px;color:#6b737b;">3</div>
<div class="a" style="left:551px;top:462px;width:24px;height:23.6px;box-sizing:border-box;border-radius:3px;background:#fff;border:1px solid #dfe2e6"></div>
<div class="t" style="left:559.80px;top:469.09px;font-size:11px;color:#6b737b;">4</div>
<div class="a" style="left:581px;top:462px;width:24px;height:23.6px;box-sizing:border-box;border-radius:3px;background:#fff;border:1px solid #dfe2e6"></div>
<div class="t" style="left:589.80px;top:469.09px;font-size:11px;color:#6b737b;">5</div>
<div class="a" style="left:611px;top:462px;width:24px;height:23.6px;box-sizing:border-box;border-radius:3px;background:#2ea6df"></div>
<svg class="a" style="left:620px;top:469.3px;" width="7" height="9" viewBox="0 0 7 9"><path d="M1.5 1 L5 4.5 L1.5 8" stroke="#ffffff" stroke-width="1.3" fill="none"/></svg>
<div class="a" style="left:641px;top:462px;width:24px;height:23.6px;box-sizing:border-box;border-radius:3px;background:#2ea6df"></div>
<svg class="a" style="left:648px;top:469.3px;" width="10" height="9" viewBox="0 0 10 9"><path d="M1 1 L4.5 4.5 L1 8 M5 1 L8.5 4.5 L5 8" stroke="#ffffff" stroke-width="1.3" fill="none"/></svg>
<div class="a" style="left:671px;top:462px;width:36.6px;height:23.6px;box-sizing:border-box;border-radius:3px;background:#fff;border:1px solid #dfe2e6"></div>
<div class="t" style="left:677.50px;top:469.09px;font-size:11px;color:#3a4047;">10</div>
<svg class="a" style="left:693.5px;top:470.8px;" width="8" height="5.5" viewBox="0 0 8 5.5"><path d="M0.9 0.9 L4 4.2 L7.1 0.9" stroke="#222" stroke-width="1.6" fill="none"/></svg>
<svg class="a" style="left:1008px;top:465px;" width="19" height="18" viewBox="0 0 19 18"><rect x="4" y="0" width="14" height="18" fill="#e4243a"/><rect x="11" y="0" width="7" height="4.5" fill="#f59aa3"/><rect x="11" y="4.5" width="7" height="9" fill="#f0616d"/><rect x="0" y="4" width="11" height="9.5" fill="#c8102e"/><text x="5.5" y="10.5" text-anchor="middle" font-family="Liberation Sans" font-weight="bold" font-size="4.5" fill="#fff">PDF</text></svg>
<svg class="a" style="left:1033.3px;top:465px;" width="19" height="18" viewBox="0 0 19 18"><rect x="4" y="0" width="15" height="18" fill="#1d8c4c"/><rect x="11" y="0" width="8" height="6" fill="#2fb36b"/><rect x="11" y="6" width="8" height="6" fill="#23a05a"/><rect x="4" y="12" width="15" height="6" fill="#136d3a"/><rect x="0" y="4" width="11" height="10" fill="#107c41"/><path d="M2.8 6 L8 12 M8 6 L2.8 12" stroke="#fff" stroke-width="1.4"/></svg>
<div class="t" style="left:1076.90px;top:467.74px;font-size:10.7px;color:#6b737b;">Rows: 1291</div>
</div>
<div class="a" style="left:1277.4px;top:738.7px;width:135.2px;height:35.5px;background:#1a9ee0;border-radius:18px;box-shadow:0 2px 6px rgba(0,0,0,0.10)"></div>
<svg class="a" style="left:1289.5px;top:749.5px;" width="16" height="15" viewBox="0 0 16 15"><rect x="0.5" y="1.5" width="12" height="11" rx="1.5" fill="#fff"/><rect x="2.5" y="0" width="1.6" height="3" fill="#fff"/><rect x="8.5" y="0" width="1.6" height="3" fill="#fff"/><g fill="#1a9ee0"><rect x="2" y="5.5" width="2" height="1.6"/><rect x="5.3" y="5.5" width="2" height="1.6"/><rect x="8.6" y="5.5" width="2" height="1.6"/><rect x="2" y="8.5" width="2" height="1.6"/><rect x="5.3" y="8.5" width="2" height="1.6"/></g><circle cx="12.2" cy="11" r="3.6" fill="#fff" stroke="#1a9ee0" stroke-width="0.8"/><path d="M12.2 9.2 V11.2 H13.6" stroke="#1a9ee0" stroke-width="0.9" fill="none"/></svg>
<div class="t" style="left:1314.20px;top:751.79px;font-size:11.35px;color:#ffffff;font-weight:bold;">Schedule a call</div>
<div class="a" style="left:1424.7px;top:738.7px;width:115.3px;height:36px;background:#1a9ee0;border-radius:18px;box-shadow:0 4px 10px rgba(0,0,0,0.18)"></div>
<svg class="a" style="left:1436.4px;top:750.8px;" width="16" height="14" viewBox="0 0 16 14"><path d="M8 0.3 C12.3 0.3 15.7 3.2 15.7 7 V13.7 H8 C3.7 13.7 0.3 10.8 0.3 7 C0.3 3.2 3.7 0.3 8 0.3 Z" fill="#fff"/></svg>
<div class="t" style="left:1458.00px;top:752.43px;font-size:11.3px;color:#ffffff;font-weight:bold;">Chat with us</div>
</body></html>
